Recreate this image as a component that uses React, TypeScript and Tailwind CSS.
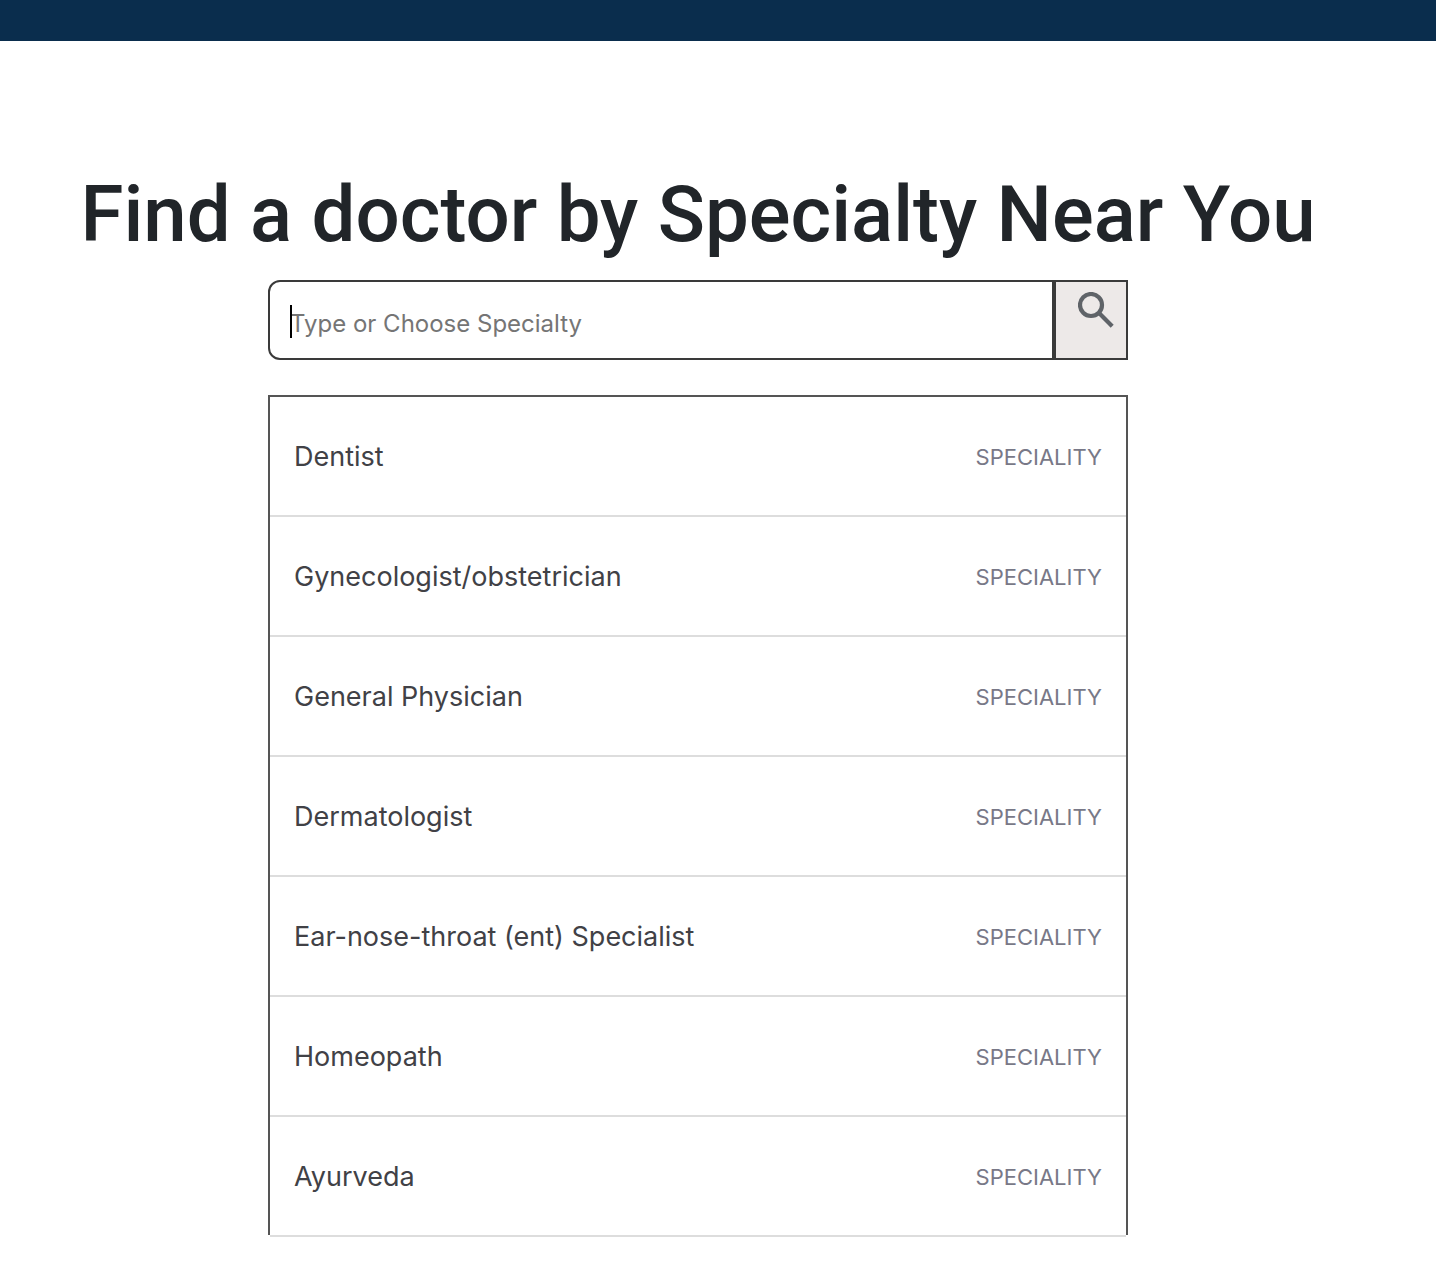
const specialties = [
  "Dentist",
  "Gynecologist/obstetrician",
  "General Physician",
  "Dermatologist",
  "Ear-nose-throat (ent) Specialist",
  "Homeopath",
  "Ayurveda",
];

function SearchIcon() {
  return (
    <svg viewBox="0 0 36 36" className="h-9 w-9" fill="none" stroke="#5f6368" strokeWidth="4.2" aria-hidden="true">
      <circle cx="13" cy="13" r="11" />
      <path d="M20.8 20.8 34.2 34.2" />
    </svg>
  );
}

export default function App() {
  return (
    <div className="min-h-screen bg-white font-['Inter','Liberation_Sans',sans-serif]">
      <header className="h-[41px] bg-[#0a2d4d]" />
      <main className="flex flex-col items-center pt-[126px] pr-10 pb-[27px]">
        <h1 className="text-center font-['Roboto','Inter',sans-serif] text-[78px] leading-[96px] font-medium whitespace-nowrap text-[#212529]">
          Find a doctor by Specialty Near You
        </h1>
        <form role="search" className="mt-[17px] flex h-20 w-full max-w-[860px]" onSubmit={(e) => e.preventDefault()}>
          <div className="relative flex min-w-0 flex-1">
            <input
              type="text"
              aria-label="Specialty"
              placeholder="Type or Choose Specialty"
              className="w-full rounded-l-xl border-2 border-[#3a3a3a] px-5 pt-2 text-2xl outline-none placeholder:text-[#757575]"
            />
            <span className="absolute top-[25px] left-[22px] h-[33px] w-0.5 bg-black" aria-hidden="true" />
          </div>
          <button
            type="submit"
            aria-label="Search"
            className="flex w-[74px] items-start justify-end border-2 border-[#3a3a3a] bg-[#ede9e8] pt-[10px] pr-3"
          >
            <SearchIcon />
          </button>
        </form>
        <ul className="mt-[35px] flex w-full max-w-[860px] flex-col border-x-2 border-t-2 border-[#555]">
          {specialties.map((name) => (
            <li key={name} className="border-b-2 border-[#ddd] last:-mb-0.5">
              <a href="#" className="flex h-[118px] items-center justify-between px-6 pt-0.5">
                <span className="text-[27px] leading-8 text-[#414146]">{name}</span>
                <span className="text-[22px] leading-8 text-[#787887]">SPECIALITY</span>
              </a>
            </li>
          ))}
        </ul>
      </main>
    </div>
  );
}
